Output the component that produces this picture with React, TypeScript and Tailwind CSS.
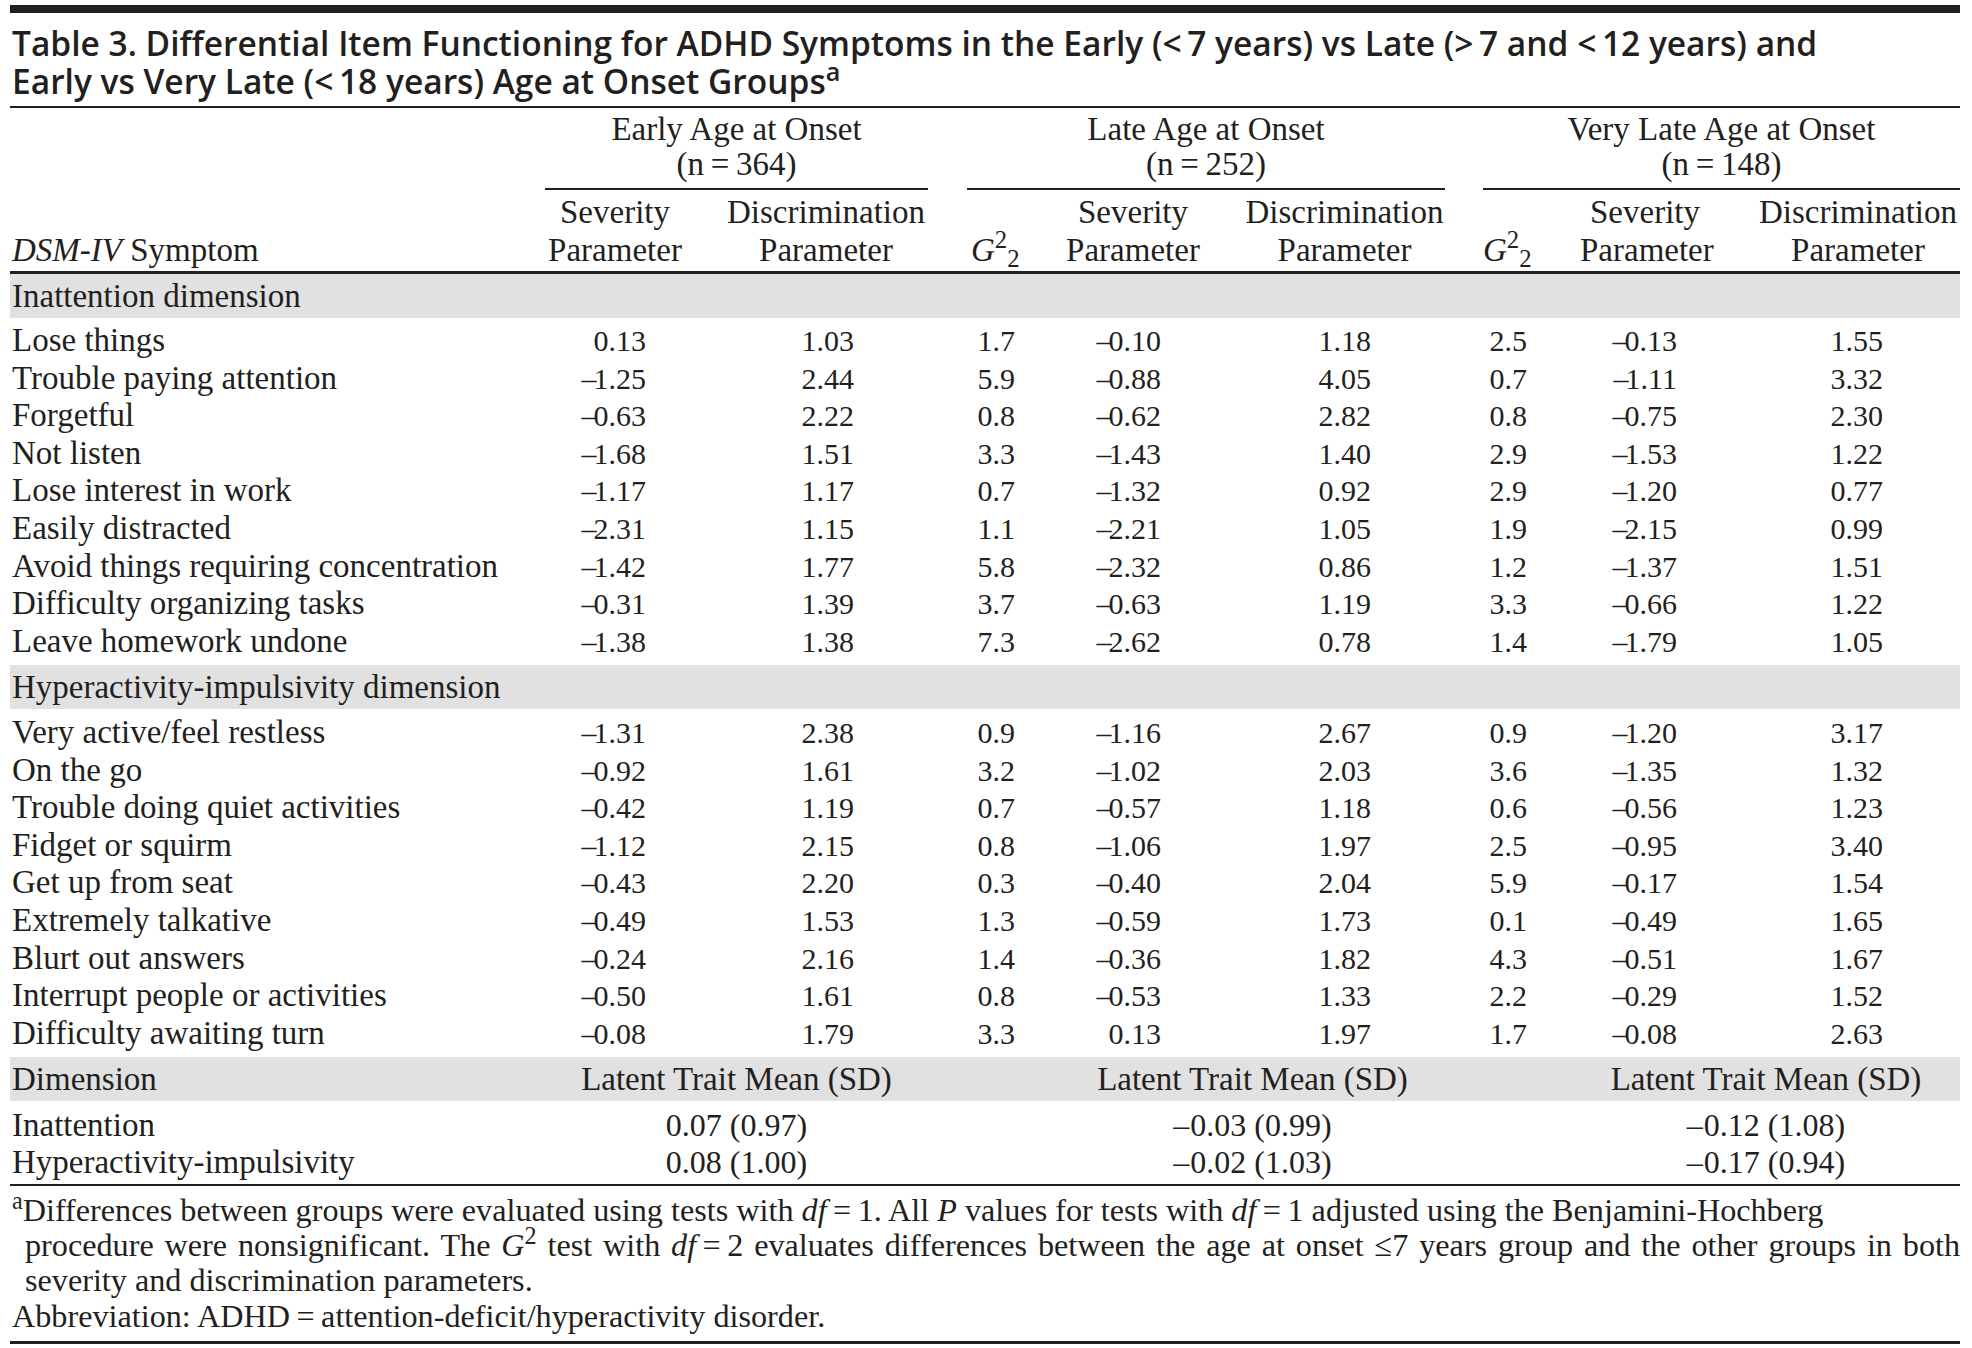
import React from "react";

const COLS =
  "grid grid-cols-[535px_140px_282px_93px_146px_277px_97px_130px_250px]";

type Row = [string, string, string, string, string, string, string, string, string];

const inattention: Row[] = [
  ["Lose things", "0.13", "1.03", "1.7", "−0.10", "1.18", "2.5", "−0.13", "1.55"],
  ["Trouble paying attention", "−1.25", "2.44", "5.9", "−0.88", "4.05", "0.7", "−1.11", "3.32"],
  ["Forgetful", "−0.63", "2.22", "0.8", "−0.62", "2.82", "0.8", "−0.75", "2.30"],
  ["Not listen", "−1.68", "1.51", "3.3", "−1.43", "1.40", "2.9", "−1.53", "1.22"],
  ["Lose interest in work", "−1.17", "1.17", "0.7", "−1.32", "0.92", "2.9", "−1.20", "0.77"],
  ["Easily distracted", "−2.31", "1.15", "1.1", "−2.21", "1.05", "1.9", "−2.15", "0.99"],
  ["Avoid things requiring concentration", "−1.42", "1.77", "5.8", "−2.32", "0.86", "1.2", "−1.37", "1.51"],
  ["Difficulty organizing tasks", "−0.31", "1.39", "3.7", "−0.63", "1.19", "3.3", "−0.66", "1.22"],
  ["Leave homework undone", "−1.38", "1.38", "7.3", "−2.62", "0.78", "1.4", "−1.79", "1.05"],
];

const hyper: Row[] = [
  ["Very active/feel restless", "−1.31", "2.38", "0.9", "−1.16", "2.67", "0.9", "−1.20", "3.17"],
  ["On the go", "−0.92", "1.61", "3.2", "−1.02", "2.03", "3.6", "−1.35", "1.32"],
  ["Trouble doing quiet activities", "−0.42", "1.19", "0.7", "−0.57", "1.18", "0.6", "−0.56", "1.23"],
  ["Fidget or squirm", "−1.12", "2.15", "0.8", "−1.06", "1.97", "2.5", "−0.95", "3.40"],
  ["Get up from seat", "−0.43", "2.20", "0.3", "−0.40", "2.04", "5.9", "−0.17", "1.54"],
  ["Extremely talkative", "−0.49", "1.53", "1.3", "−0.59", "1.73", "0.1", "−0.49", "1.65"],
  ["Blurt out answers", "−0.24", "2.16", "1.4", "−0.36", "1.82", "4.3", "−0.51", "1.67"],
  ["Interrupt people or activities", "−0.50", "1.61", "0.8", "−0.53", "1.33", "2.2", "−0.29", "1.52"],
  ["Difficulty awaiting turn", "−0.08", "1.79", "3.3", "0.13", "1.97", "1.7", "−0.08", "2.63"],
];

const PR = [
  "pr-[39px]",
  "pr-[113px]",
  "pr-[45px]",
  "pr-[45px]",
  "pr-[112px]",
  "pr-[53px]",
  "pr-[33px]",
  "pr-[77px]",
];

function Num({ v, tight = true }: { v: string; tight?: boolean }) {
  if (v.startsWith("−")) {
    return (
      <>
        <span className={tight ? "tracking-[-3px]" : "tracking-[1px]"}>–</span>
        {v.slice(1)}
      </>
    );
  }
  return <>{v}</>;
}

function DataRow({ r }: { r: Row }) {
  return (
    <div className={`${COLS} h-[37.6px] leading-[37.6px]`}>
      <div className="pl-[2px] whitespace-nowrap">{r[0]}</div>
      {r.slice(1).map((v, i) => (
        <div key={i} className={`text-right text-[30px] whitespace-nowrap ${PR[i]}`}>
          <Num v={v} />
        </div>
      ))}
    </div>
  );
}

function Band({ children }: { children: React.ReactNode }) {
  return (
    <div className="h-[44px] leading-[44px] bg-[#e1e1e1] pl-[2px] whitespace-nowrap">
      {children}
    </div>
  );
}

function G2() {
  return (
    <span className="whitespace-nowrap">
      <i>G</i>
      <sup>2</sup>
      <sub>2</sub>
    </span>
  );
}

function GroupHead({ title, n }: { title: string; n: string }) {
  return (
    <>
      <div>{title}</div>
      <div>(n{"\u2009"}={"\u2009"}{n})</div>
      <div className="mt-[6px] h-[2px] bg-[#231f20]" />
    </>
  );
}

export default function App() {
  return (
    <div className="min-h-screen bg-white">
      <div className="w-[1950px] ml-[10px] pt-[5px] text-[#231f20] font-['Liberation_Serif',serif] text-[33px]">
        <div className="h-[8px] bg-[#231f20]" />
        <div className="mt-[11px] pl-[2px] font-['Open_Sans',sans-serif] font-semibold text-[33.5px] leading-[38px] whitespace-nowrap">
          <div>
            Table 3. Differential Item Functioning for ADHD Symptoms in the Early (&lt;{"\u2009"}7 years) vs Late (&gt;{"\u2009"}7 and &lt;{"\u2009"}12 years) and
          </div>
          <div>
            Early vs Very Late (&lt;{"\u2009"}18 years) Age at Onset Groups<sup>a</sup>
          </div>
        </div>
        <div className="mt-[6px] h-[2px] bg-[#231f20]" />

        {/* group headers */}
        <div className={`${COLS} pt-[4px] leading-[35px]`}>
          <div />
          <div className="col-span-2 mr-[39px] text-center">
            <GroupHead title="Early Age at Onset" n="364" />
          </div>
          <div className="col-span-3 mr-[38px] text-center">
            <GroupHead title="Late Age at Onset" n="252" />
          </div>
          <div className="col-span-3 text-center">
            <GroupHead title="Very Late Age at Onset" n="148" />
          </div>
        </div>

        {/* sub headers */}
        <div className={`${COLS} pt-[2.5px] pb-[2.5px] leading-[38px]`}>
          <div className="flex flex-col justify-end pl-[2px] whitespace-nowrap">
            <span>
              <i>DSM-IV</i> Symptom
            </span>
          </div>
          <div className="text-center">
            <div>Severity</div>
            <div>Parameter</div>
          </div>
          <div className="text-center">
            <div>Discrimination</div>
            <div>Parameter</div>
          </div>
          <div className="flex flex-col justify-end pl-[4px]">
            <G2 />
          </div>
          <div className="text-center">
            <div>Severity</div>
            <div>Parameter</div>
          </div>
          <div className="text-center">
            <div>Discrimination</div>
            <div>Parameter</div>
          </div>
          <div className="flex flex-col justify-end">
            <G2 />
          </div>
          <div className="text-center">
            <div>Severity</div>
            <div>Parameter</div>
          </div>
          <div className="pl-[46px] text-center">
            <div>Discrimination</div>
            <div>Parameter</div>
          </div>
        </div>
        <div className="h-[3px] bg-[#231f20]" />

        <Band>Inattention dimension</Band>
        <div className="pt-[4px] pb-[4.6px]">
          {inattention.map((r) => (
            <DataRow key={r[0]} r={r} />
          ))}
        </div>

        <Band>Hyperactivity-impulsivity dimension</Band>
        <div className="pt-[5px] pb-[4.6px]">
          {hyper.map((r) => (
            <DataRow key={r[0]} r={r} />
          ))}
        </div>

        <div className={`${COLS} h-[44px] leading-[44px] bg-[#e1e1e1] whitespace-nowrap`}>
          <div className="pl-[2px]">Dimension</div>
          <div className="col-span-2 mr-[39px] text-center">Latent Trait Mean (SD)</div>
          <div className="col-start-5 col-span-2 mr-[38px] text-center">Latent Trait Mean (SD)</div>
          <div className="col-start-8 col-span-2 mr-[8px] text-center">Latent Trait Mean (SD)</div>
        </div>
        <div className="pt-[6px] pb-[3px]">
          {[
            ["Inattention", "0.07 (0.97)", "−0.03 (0.99)", "−0.12 (1.08)"],
            ["Hyperactivity-impulsivity", "0.08 (1.00)", "−0.02 (1.03)", "−0.17 (0.94)"],
          ].map((r) => (
            <div key={r[0]} className={`${COLS} h-[37px] leading-[37px] whitespace-nowrap`}>
              <div className="pl-[2px]">{r[0]}</div>
              <div className="col-span-2 mr-[39px] text-center text-[32px]">
                <Num v={r[1]} tight={false} />
              </div>
              <div className="col-start-5 col-span-2 mr-[38px] text-center text-[32px]">
                <Num v={r[2]} tight={false} />
              </div>
              <div className="col-start-8 col-span-2 mr-[8px] text-center text-[32px]">
                <Num v={r[3]} tight={false} />
              </div>
            </div>
          ))}
        </div>
        <div className="h-[2px] bg-[#231f20]" />

        <div className="pt-[7px] pl-[2px] text-[32.2px] leading-[35.3px] whitespace-nowrap">
          <div>
            <sup>a</sup>Differences between groups were evaluated using tests with <i>df</i>
            {"\u2009"}={"\u2009"}1. All <i>P</i> values for tests with <i>df</i>
            {"\u2009"}={"\u2009"}1 adjusted using the Benjamini-Hochberg
          </div>
          <div className="pl-[13px] text-justify [text-align-last:justify]">
            procedure were nonsignificant. The <i>G</i>
            <sup>2</sup> test with <i>df</i>
            {"\u2009"}={"\u2009"}2 evaluates differences between the age at onset ≤7 years group and the other groups in both
          </div>
          <div className="pl-[13px]">severity and discrimination parameters.</div>
          <div>
            Abbreviation: ADHD{"\u2009"}={"\u2009"}attention-deficit/hyperactivity disorder.
          </div>
        </div>
        <div className="mt-[7px] h-[3px] bg-[#231f20]" />
      </div>
    </div>
  );
}
